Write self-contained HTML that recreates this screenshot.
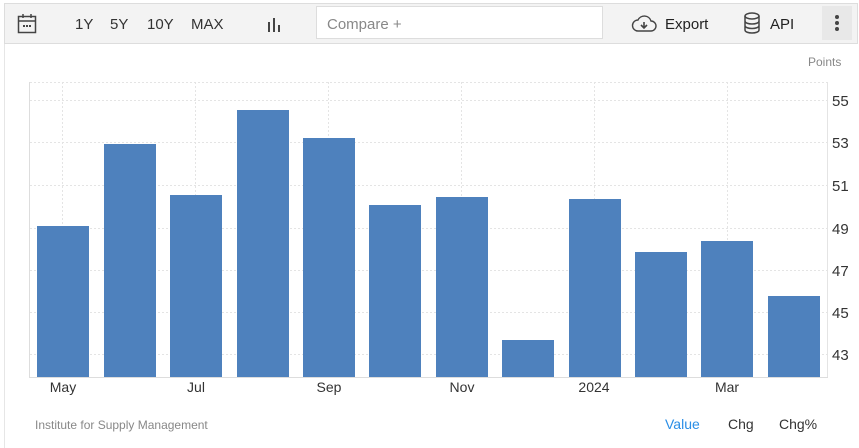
<!DOCTYPE html>
<html><head><style>
body{margin:0;width:859px;height:448px;background:#fff;font-family:"Liberation Sans",Arial,sans-serif;position:relative;overflow:hidden}
.tb{position:absolute;left:4px;top:3px;width:852px;height:39px;background:#f3f3f3;border:1px solid #ddd}
.t{position:absolute;font-size:15px;color:#333;top:16px}
.cmp{position:absolute;left:316px;top:6px;width:287px;height:33px;background:#fff;border:1px solid #ddd;box-sizing:border-box;color:#888;font-size:15px;padding:9px 10px}
.lb{position:absolute;font-size:14px;color:#333}
</style></head><body>
<div style="position:absolute;left:4px;top:43px;width:1px;height:405px;background:#e6e6e6"></div>
<div class="tb"></div>
<svg style="position:absolute;left:17px;top:13px" width="20" height="22" viewBox="0 0 20 22"><rect x="1.5" y="3.5" width="17" height="16" fill="none" stroke="#444" stroke-width="1.5"/><line x1="1.5" y1="8" x2="18.5" y2="8" stroke="#444" stroke-width="1.5"/><line x1="6" y1="1" x2="6" y2="5" stroke="#444" stroke-width="1.5"/><line x1="14" y1="1" x2="14" y2="5" stroke="#444" stroke-width="1.5"/><rect x="6" y="12" width="2" height="2" fill="#444"/><rect x="9" y="12" width="2" height="2" fill="#444"/><rect x="12" y="12" width="2" height="2" fill="#444"/></svg>
<span class="t" style="left:75px">1Y</span><span class="t" style="left:110px">5Y</span><span class="t" style="left:147px">10Y</span><span class="t" style="left:191px">MAX</span>
<svg style="position:absolute;left:266px;top:16px" width="16" height="16"><rect x="2" y="6" width="2" height="10" fill="#444"/><rect x="7" y="2" width="2" height="14" fill="#444"/><rect x="12" y="9" width="2" height="7" fill="#444"/></svg>
<div class="cmp">Compare +</div>
<svg style="position:absolute;left:631px;top:14px" width="26" height="20" viewBox="0 0 26 20"><path d="M7 17 H20 a5 5 0 0 0 0-10 a7 7 0 0 0-13-1 a5.5 5.5 0 0 0 0 11z" fill="none" stroke="#444" stroke-width="1.4"/><path d="M13 8v6m-3-3l3 3 3-3" fill="none" stroke="#444" stroke-width="1.6"/></svg>
<span class="t" style="left:665px;color:#222">Export</span>
<svg style="position:absolute;left:743px;top:12px" width="18" height="22" viewBox="0 0 18 22"><ellipse cx="9" cy="4" rx="7" ry="3" fill="none" stroke="#444" stroke-width="1.5"/><path d="M2 4v14c0 4 14 4 14 0V4M2 9c0 4 14 4 14 0M2 13.5c0 4 14 4 14 0" fill="none" stroke="#444" stroke-width="1.5"/></svg>
<span class="t" style="left:770px;color:#222">API</span>
<div style="position:absolute;left:822px;top:6px;width:30px;height:34px;background:#e8e8e8"></div>
<svg style="position:absolute;left:834px;top:14px" width="6" height="18"><circle cx="3" cy="3" r="2" fill="#444"/><circle cx="3" cy="9" r="2" fill="#444"/><circle cx="3" cy="15" r="2" fill="#444"/></svg>
<span style="position:absolute;left:808px;top:55px;font-size:12px;color:#888">Points</span>
<svg style="position:absolute;left:0;top:0" width="859" height="448">
<g stroke="#e4e4e4" stroke-dasharray="2,2" stroke-width="1">
<line x1="30" y1="82.5" x2="827" y2="82.5"/>
<line x1="30" y1="100.5" x2="827" y2="100.5"/><line x1="30" y1="142.5" x2="827" y2="142.5"/><line x1="30" y1="185.5" x2="827" y2="185.5"/><line x1="30" y1="228.5" x2="827" y2="228.5"/><line x1="30" y1="270.5" x2="827" y2="270.5"/><line x1="30" y1="312.5" x2="827" y2="312.5"/><line x1="30" y1="354.5" x2="827" y2="354.5"/>
<line x1="62.5" y1="82" x2="62.5" y2="377"/><line x1="195.5" y1="82" x2="195.5" y2="377"/><line x1="328.5" y1="82" x2="328.5" y2="377"/><line x1="461.5" y1="82" x2="461.5" y2="377"/><line x1="594.5" y1="82" x2="594.5" y2="377"/><line x1="727.5" y1="82" x2="727.5" y2="377"/>
</g>
<line x1="29.5" y1="82" x2="29.5" y2="377" stroke="#ddd"/>
<line x1="827.5" y1="82" x2="827.5" y2="377" stroke="#e4e4e4"/>
<line x1="29" y1="377.5" x2="828" y2="377.5" stroke="#ddd"/>
<g fill="#4e81bd">
<rect x="37" y="226" width="52" height="151"/><rect x="104" y="144" width="52" height="233"/><rect x="170" y="195" width="52" height="182"/><rect x="237" y="110" width="52" height="267"/><rect x="303" y="138" width="52" height="239"/><rect x="369" y="205" width="52" height="172"/><rect x="436" y="197" width="52" height="180"/><rect x="502" y="340" width="52" height="37"/><rect x="569" y="199" width="52" height="178"/><rect x="635" y="252" width="52" height="125"/><rect x="701" y="241" width="52" height="136"/><rect x="768" y="296" width="52" height="81"/>
</g>
<g font-family="Liberation Sans" font-size="15" fill="#333">
<text x="832" y="106">55</text><text x="832" y="148">53</text><text x="832" y="191">51</text><text x="832" y="234">49</text><text x="832" y="276">47</text><text x="832" y="318">45</text><text x="832" y="360">43</text>
</g>
<g font-family="Liberation Sans" font-size="14" fill="#333">
<text x="63" y="392" text-anchor="middle">May</text><text x="196" y="392" text-anchor="middle">Jul</text><text x="329" y="392" text-anchor="middle">Sep</text><text x="462" y="392" text-anchor="middle">Nov</text><text x="594" y="392" text-anchor="middle">2024</text><text x="727" y="392" text-anchor="middle">Mar</text>
</g>
</svg>
<span style="position:absolute;left:35px;top:418px;font-size:12px;color:#888">Institute for Supply Management</span>
<span class="lb" style="left:665px;top:416px;color:#2a8ee6">Value</span>
<span class="lb" style="left:728px;top:416px">Chg</span>
<span class="lb" style="left:779px;top:416px">Chg%</span>
</body></html>
